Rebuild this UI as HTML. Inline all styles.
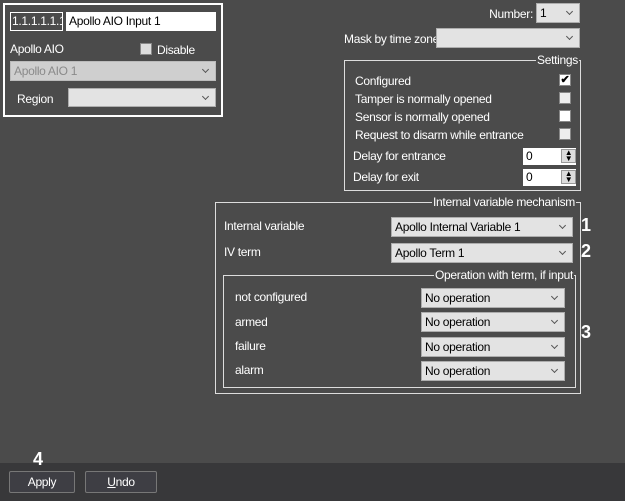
<!DOCTYPE html>
<html><head><style>
body{margin:0;width:625px;height:501px;background:#4b4b4b;font-family:"Liberation Sans",sans-serif;font-size:12px;letter-spacing:-0.3px;color:#fff;position:relative;overflow:hidden}
.a{position:absolute}
.t{position:absolute;white-space:nowrap;line-height:14px}
.sel{position:absolute;background:#e3e3e3;border:1px solid #adadad;box-sizing:border-box;color:#000;padding-left:3px;line-height:18px;white-space:nowrap}
.sel:after{content:"";position:absolute;right:7px;top:5px;width:4px;height:4px;border-right:1px solid #555;border-bottom:1px solid #555;transform:rotate(45deg)}
.grp{position:absolute;border:1px solid #ddd;box-sizing:border-box}
.leg{position:absolute;background:#4b4b4b;padding:0 1px;line-height:14px;color:#fff;white-space:nowrap}
.cb{position:absolute;width:12px;height:12px;background:#fff;border:1px solid #888;box-sizing:border-box}
.n{position:absolute;font-weight:bold;font-size:18px;color:#fff;letter-spacing:0}
.btn{position:absolute;border:1px solid #777;background:#3e3e44;color:#fff;text-align:center;line-height:20px;box-sizing:border-box;border-radius:2px}
.spin{position:absolute;background:#fff;color:#000;box-sizing:border-box;padding-left:3px;line-height:16px}
.spin b{position:absolute;right:0;top:1px;width:15px;height:14px;background:#ddd;border:1px solid #999;box-sizing:border-box;font-size:8px;text-align:center;line-height:6px;font-weight:normal}
</style></head><body>
<div class="a" style="left:3px;top:3px;width:220px;height:114px;border:2px solid #fff;box-sizing:border-box"></div>
<div class="a" style="left:10px;top:12px;width:53px;height:19px;border:1px solid #fff;box-sizing:border-box;line-height:17px;padding-left:1px;overflow:hidden;white-space:nowrap">1.1.1.1.1.1</div>
<div class="a" style="left:66px;top:12px;width:150px;height:19px;background:#fff;color:#000;line-height:19px;padding-left:3px;box-sizing:border-box">Apollo AIO Input 1</div>
<div class="t" style="left:10px;top:42px">Apollo AIO</div>
<div class="cb" style="left:140px;top:43px;background:#ddd"></div>
<div class="t" style="left:157px;top:43px">Disable</div>
<div class="sel" style="left:10px;top:61px;width:206px;height:20px;background:#cfcfcf;color:#8a8a8a;border-color:#bbb">Apollo AIO 1</div>
<div class="t" style="left:17px;top:92px">Region</div>
<div class="sel" style="left:68px;top:88px;width:148px;height:19px"></div>

<div class="t" style="right:92px;top:7px">Number:</div>
<div class="sel" style="left:536px;top:3px;width:44px;height:20px">1</div>
<div class="t" style="left:344px;top:32px">Mask by time zone</div>
<div class="sel" style="left:436px;top:28px;width:144px;height:20px"></div>

<div class="grp" style="left:344px;top:60px;width:237px;height:131px"></div>
<div class="leg" style="right:46px;top:53px">Settings</div>
<div class="t" style="left:355px;top:74px">Configured</div>
<div class="t" style="left:355px;top:92px">Tamper is normally opened</div>
<div class="t" style="left:355px;top:110px">Sensor is normally opened</div>
<div class="t" style="left:355px;top:128px">Request to disarm while entrance</div>
<div class="cb" style="left:559px;top:74px;color:#000;font-size:11px;line-height:10px;text-align:center;font-weight:bold">✔</div>
<div class="cb" style="left:559px;top:92px;background:#eee"></div>
<div class="cb" style="left:559px;top:110px"></div>
<div class="cb" style="left:559px;top:128px;background:#eee"></div>
<div class="t" style="left:353px;top:149px">Delay for entrance</div>
<div class="t" style="left:353px;top:170px">Delay for exit</div>
<div class="spin" style="left:523px;top:148px;width:53px;height:17px">0<b>▲<br>▼</b></div>
<div class="spin" style="left:523px;top:169px;width:53px;height:17px">0<b>▲<br>▼</b></div>

<div class="grp" style="left:215px;top:202px;width:366px;height:192px"></div>
<div class="leg" style="right:49px;top:195px">Internal variable mechanism</div>
<div class="t" style="left:224px;top:219px">Internal variable</div>
<div class="sel" style="left:391px;top:217px;width:182px;height:20px">Apollo Internal Variable 1</div>
<div class="n" style="left:581px;top:215px">1</div>
<div class="t" style="left:224px;top:245px">IV term</div>
<div class="sel" style="left:391px;top:243px;width:182px;height:20px">Apollo Term 1</div>
<div class="n" style="left:581px;top:241px">2</div>

<div class="grp" style="left:223px;top:275px;width:353px;height:113px"></div>
<div class="leg" style="right:51px;top:268px">Operation with term, if input</div>
<div class="t" style="left:235px;top:290px">not configured</div>
<div class="t" style="left:235px;top:315px">armed</div>
<div class="t" style="left:235px;top:339px">failure</div>
<div class="t" style="left:235px;top:363px">alarm</div>
<div class="sel" style="left:421px;top:288px;width:144px;height:20px">No operation</div>
<div class="sel" style="left:421px;top:312px;width:144px;height:20px">No operation</div>
<div class="sel" style="left:421px;top:337px;width:144px;height:20px">No operation</div>
<div class="sel" style="left:421px;top:361px;width:144px;height:20px">No operation</div>
<div class="n" style="left:581px;top:322px">3</div>

<div class="a" style="left:0;top:463px;width:625px;height:38px;background:#38383a"></div>
<div class="n" style="left:33px;top:449px">4</div>
<div class="btn" style="left:9px;top:471px;width:66px;height:22px">Apply</div>
<div class="btn" style="left:85px;top:471px;width:72px;height:22px"><u>U</u>ndo</div>
</body></html>
